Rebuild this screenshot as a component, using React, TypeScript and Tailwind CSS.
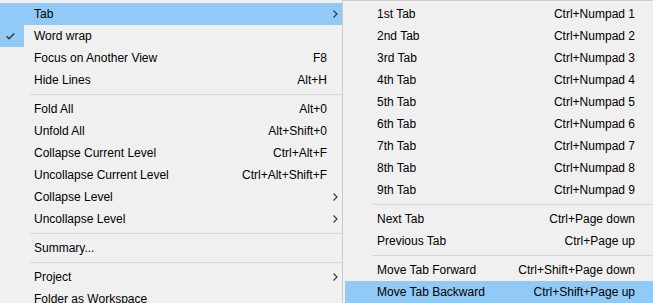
import React from "react";

type Item =
  | { sep: true }
  | { sep?: false; label: string; shortcut?: string; sub?: boolean; checked?: boolean; active?: boolean };

const leftItems: Item[] = [
  { label: "Tab", sub: true, active: true },
  { label: "Word wrap", checked: true },
  { label: "Focus on Another View", shortcut: "F8" },
  { label: "Hide Lines", shortcut: "Alt+H" },
  { sep: true },
  { label: "Fold All", shortcut: "Alt+0" },
  { label: "Unfold All", shortcut: "Alt+Shift+0" },
  { label: "Collapse Current Level", shortcut: "Ctrl+Alt+F" },
  { label: "Uncollapse Current Level", shortcut: "Ctrl+Alt+Shift+F" },
  { label: "Collapse Level", sub: true },
  { label: "Uncollapse Level", sub: true },
  { sep: true },
  { label: "Summary..." },
  { sep: true },
  { label: "Project", sub: true },
  { label: "Folder as Workspace" },
];

const rightItems: Item[] = [
  { label: "1st Tab", shortcut: "Ctrl+Numpad 1" },
  { label: "2nd Tab", shortcut: "Ctrl+Numpad 2" },
  { label: "3rd Tab", shortcut: "Ctrl+Numpad 3" },
  { label: "4th Tab", shortcut: "Ctrl+Numpad 4" },
  { label: "5th Tab", shortcut: "Ctrl+Numpad 5" },
  { label: "6th Tab", shortcut: "Ctrl+Numpad 6" },
  { label: "7th Tab", shortcut: "Ctrl+Numpad 7" },
  { label: "8th Tab", shortcut: "Ctrl+Numpad 8" },
  { label: "9th Tab", shortcut: "Ctrl+Numpad 9" },
  { sep: true },
  { label: "Next Tab", shortcut: "Ctrl+Page down" },
  { label: "Previous Tab", shortcut: "Ctrl+Page up" },
  { sep: true },
  { label: "Move Tab Forward", shortcut: "Ctrl+Shift+Page down" },
  { label: "Move Tab Backward", shortcut: "Ctrl+Shift+Page up", active: true },
];

function Chevron() {
  return (
    <svg width="5" height="8" viewBox="0 0 5 8" className="block">
      <path d="M0.5 0.5 L4 4 L0.5 7.5" fill="none" stroke="#333" strokeWidth="1.1" />
    </svg>
  );
}

function Check() {
  return (
    <svg width="9" height="7" viewBox="0 0 9 7" className="block">
      <path d="M0.7 3.3 L3 5.8 L8.3 0.6" fill="none" stroke="#333" strokeWidth="1.4" />
    </svg>
  );
}

function LeftMenu() {
  return (
    <div className="w-[342px] shrink-0 pt-[3px]">
      {leftItems.map((it, i) =>
        it.sep ? (
          <div key={i} className="h-[7px] flex items-center pl-[30px]">
            <div className="h-px w-full bg-[#d7d7d7]" />
          </div>
        ) : (
          <div
            key={i}
            className={`h-[22px] flex items-center ${it.active ? "bg-[#91c9f7]" : ""}`}
          >
            <div
              className={`w-[24px] h-[22px] flex items-center justify-start pl-[6px] shrink-0 ${
                it.checked ? "bg-[#91c9f7]" : ""
              }`}
            >
              {it.checked ? <Check /> : null}
            </div>
            <div className="ml-[10px] flex-1 whitespace-nowrap">{it.label}</div>
            <div className="whitespace-nowrap">{it.shortcut ?? ""}</div>
            <div className="w-[15px] h-[22px] flex items-center justify-start pl-[6px] shrink-0">
              {it.sub ? <Chevron /> : null}
            </div>
          </div>
        )
      )}
    </div>
  );
}

function SubMenu() {
  return (
    <div className="w-[311px] shrink-0 self-start border-l border-t border-[#cccccc] pt-[2px] pl-[2px]">
      {rightItems.map((it, i) =>
        it.sep ? (
          <div key={i} className="h-[7px] flex items-center pl-[28px]">
            <div className="h-px w-full bg-[#d7d7d7]" />
          </div>
        ) : (
          <div
            key={i}
            className={`h-[22px] flex items-center pl-[32px] pr-[18px] ${it.active ? "bg-[#91c9f7]" : ""}`}
          >
            <div className="flex-1 whitespace-nowrap">{it.label}</div>
            <div className="whitespace-nowrap">{it.shortcut ?? ""}</div>
          </div>
        )
      )}
    </div>
  );
}

export default function App() {
  return (
    <div
      className="w-[653px] h-[303px] overflow-hidden flex bg-[#f0f0f0] text-[12px] text-black leading-none"
      style={{ fontFamily: '"Segoe UI", "Liberation Sans", Arial, sans-serif' }}
    >
      <LeftMenu />
      <SubMenu />
    </div>
  );
}
